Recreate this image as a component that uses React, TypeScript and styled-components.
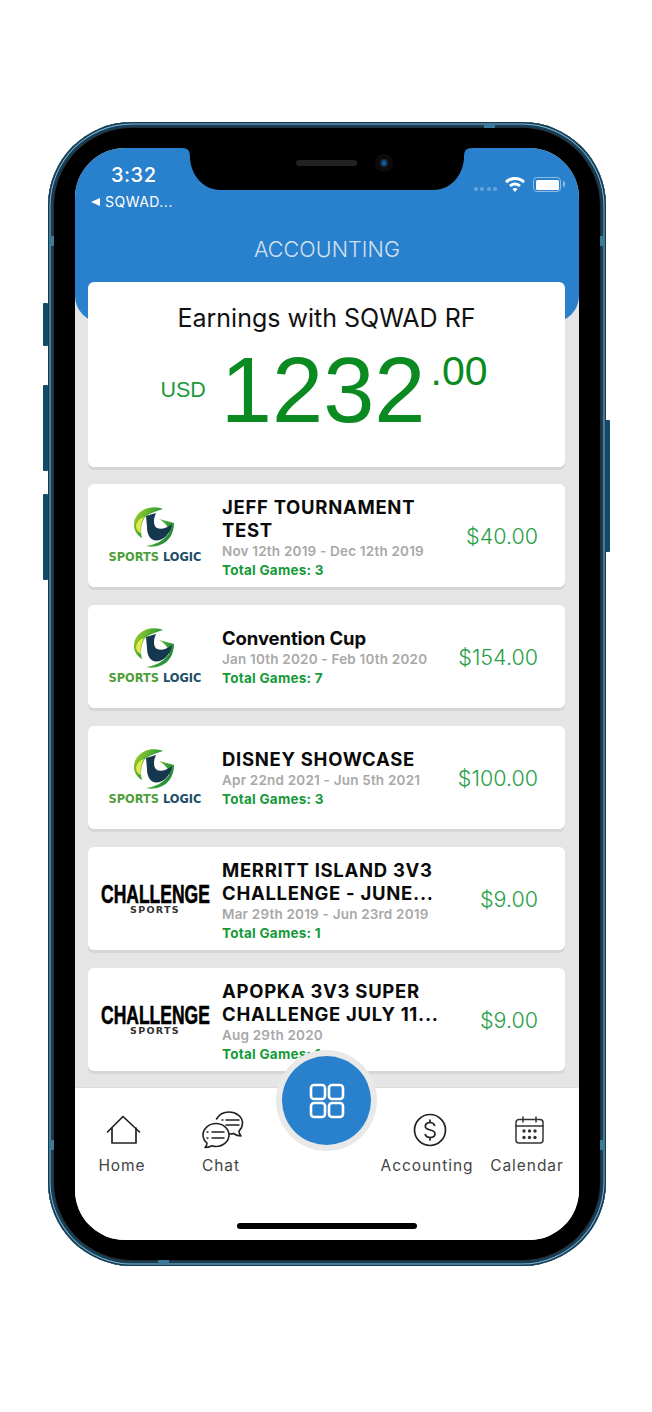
import React from 'react';
import styled, { createGlobalStyle } from 'styled-components';

const BLUE = '#2980cc';
const GREEN = '#17993a';

const GlobalStyle = createGlobalStyle`
  html, body {
    margin: 0;
    background: #fff;
  }
  body {
    font-family: 'Inter', 'Liberation Sans', sans-serif;
  }
`;

type Logo = 'logic' | 'challenge';

const events: {
  title: string[];
  dates: string;
  games: number;
  price: string;
  logo: Logo;
}[] = [
  { title: ['JEFF TOURNAMENT', 'TEST'], dates: 'Nov 12th 2019 - Dec 12th 2019', games: 3, price: '$40.00', logo: 'logic' },
  { title: ['Convention Cup'], dates: 'Jan 10th 2020 - Feb 10th 2020', games: 7, price: '$154.00', logo: 'logic' },
  { title: ['DISNEY SHOWCASE'], dates: 'Apr 22nd 2021 - Jun 5th 2021', games: 3, price: '$100.00', logo: 'logic' },
  { title: ['MERRITT ISLAND 3V3', 'CHALLENGE - JUNE...'], dates: 'Mar 29th 2019 - Jun 23rd 2019', games: 1, price: '$9.00', logo: 'challenge' },
  { title: ['APOPKA 3V3 SUPER', 'CHALLENGE JULY 11...'], dates: 'Aug 29th 2020', games: 1, price: '$9.00', logo: 'challenge' },
];

const SportsLogicLogo = () => (
  <LogicWrap>
    <svg width="44" height="42" viewBox="0 0 44 42">
      <defs>
        <linearGradient id="swoosh" x1="0" y1="0.2" x2="1" y2="0.8">
          <stop offset="0" stopColor="#a6d02c" />
          <stop offset="0.5" stopColor="#3fa535" />
          <stop offset="1" stopColor="#137a38" />
        </linearGradient>
      </defs>
      <path d="M30 2C24 -1 12 -1 5 7C-1 14 -1 25 9 31C7 24 8 16 12 10C17 6 24 4 30 2Z" fill="url(#swoosh)" />
      <path d="M26 12L41 16C41 26 36 35 27 38C22 40 17 40 13 39C21 38 31 34 36 26C37 22 34 17 26 12Z" fill="url(#swoosh)" />
      <path d="M3 19C4 14 7 11 11 10C8 15 7 21 8 26C5 25 3 22 3 19Z" fill="#e3e84e" />
      <path d="M13 9L23 6L21.500 10C20.500 15 21 19 24 21C28 23 34 21 39 17C38 25 32 33 24 33.500C17 34 14 27 14 20Z" fill="#16384f" />
    </svg>
    <LogicName>
      SPORTS <span>LOGIC</span>
    </LogicName>
  </LogicWrap>
);

const ChallengeLogo = () => (
  <ChallengeWrap>
    <ChallengeName>CHALLENGE</ChallengeName>
    <ChallengeSub>SPORTS</ChallengeSub>
  </ChallengeWrap>
);

const HomeIcon = () => (
  <svg width="35" height="30" viewBox="0 0 35 30" fill="none" stroke="#222" strokeWidth="1.700" strokeLinejoin="round" strokeLinecap="round">
    <path d="M1.500 17L17 1.500L33.500 17" />
    <path d="M6 13V28H30V13" />
  </svg>
);

const ChatIcon = () => (
  <svg width="42" height="38" viewBox="0 0 42 38" fill="none" stroke="#222" strokeWidth="1.600" strokeLinecap="round" strokeLinejoin="round">
    <path d="M14.500 8C17 3.500 22 1 27 1C34 1 40.500 5.500 40.500 12C40.500 15.500 39 18 37 20C37 22 38 24 39 25C36 25 33.500 24 31.500 22.500C30.500 22.800 29.500 23 28 23" />
    <path d="M14 12.500C7 12.500 1 17.500 1 24C1 27.500 2.500 30 5 32C5 33.500 4.500 35 3 36.500C6 36.500 8.500 35.500 10 34.700C11.300 35.200 12.700 35.500 14 35.500C21 35.500 27 30.500 27 24C27 17.500 21 12.500 14 12.500Z" fill="#fff" />
    <path d="M20 9H21M24 9H37M24 14H37" strokeWidth="1.400" />
    <path d="M5 21H6M10 21H22M5 27H6M10 27H22" strokeWidth="1.400" />
  </svg>
);

const DollarIcon = () => (
  <svg width="34" height="34" viewBox="0 0 34 34" fill="none" stroke="#222" strokeWidth="1.700" strokeLinecap="round">
    <circle cx="17" cy="17" r="15.500" />
    <path d="M21.500 12.500C21 10.500 19 9.500 17 9.500C14.300 9.500 12.300 11 12.300 13.300C12.300 18.500 22 15.500 22 20.800C22 23.200 19.800 24.500 17 24.500C14.700 24.500 12.800 23.300 12.200 21.500" />
    <path d="M17 7V9.500M17 24.500V27" />
  </svg>
);

const CalendarIcon = () => (
  <svg width="29" height="28" viewBox="0 0 29 28" fill="none" stroke="#333" strokeWidth="1.500" strokeLinecap="round">
    <rect x="1" y="3.500" width="27" height="23.500" rx="3" />
    <path d="M1 10H28M8 1V6M21 1V6" />
    <g fill="#333" stroke="none">
      <circle cx="9" cy="15" r="1.700" />
      <circle cx="14.500" cy="15" r="1.700" />
      <circle cx="20" cy="15" r="1.700" />
      <circle cx="9" cy="21.500" r="1.700" />
      <circle cx="14.500" cy="21.500" r="1.700" />
      <circle cx="20" cy="21.500" r="1.700" />
    </g>
  </svg>
);

const tabs = [
  { label: 'Home', icon: <HomeIcon />, col: 1, shift: 1 },
  { label: 'Chat', icon: <ChatIcon />, col: 2, shift: 2 },
  { label: 'Accounting', icon: <DollarIcon />, col: 4, shift: 3 },
  { label: 'Calendar', icon: <CalendarIcon />, col: 5, shift: 2 },
];

const App = () => (
  <>
    <GlobalStyle />
    <Phone>
      <SideButton $side="left" $top={181} $height={43} />
      <SideButton $side="left" $top={263} $height={86} />
      <SideButton $side="left" $top={372} $height={86} />
      <SideButton $side="right" $top={298} $height={132} />
      <Band $left={2} $top={114} $w={4} $h={10} />
      <Band $left={552} $top={114} $w={4} $h={10} />
      <Band $left={2} $top={1018} $w={4} $h={10} />
      <Band $left={552} $top={1018} $w={4} $h={10} />
      <Band $left={436} $top={2} $w={11} $h={4} />
      <Band $left={110} $top={1138} $w={11} $h={4} />

      <Screen>
        <Notch>
          <svg width="290" height="42" viewBox="0 0 290 42">
            <path d="M0 0H290C283 0 282 4 282 10C281 28 268 42 252 42H38C22 42 9 28 8 10C8 4 7 0 0 0Z" fill="#000" />
          </svg>
          <Speaker />
          <Camera />
        </Notch>

        <Header>
          <StatusRow>
            <StatusLeft>
              <Time>3:32</Time>
              <BackLink>
                <BackArrow />
                SQWAD...
              </BackLink>
            </StatusLeft>
            <StatusRight>
              <Dots>
                <i />
                <i />
                <i />
                <i />
              </Dots>
              <svg width="20" height="15" viewBox="0 0 20 15" fill="#fff">
                <path d="M10 0C6 0 2.700 1.500 0 4L2 6.200C4.200 4.200 7 3 10 3C13 3 15.800 4.200 18 6.200L20 4C17.300 1.500 14 0 10 0Z" />
                <path d="M10 5.500C7.700 5.500 5.600 6.400 4 7.900L6 10.100C7.100 9.100 8.500 8.500 10 8.500C11.500 8.500 12.900 9.100 14 10.100L16 7.900C14.400 6.400 12.300 5.500 10 5.500Z" />
                <path d="M10 11C9 11 8.100 11.400 7.500 12L10 15L12.500 12C11.900 11.400 11 11 10 11Z" />
              </svg>
              <Battery />
            </StatusRight>
          </StatusRow>
          <Title>ACCOUNTING</Title>
        </Header>

        <Content>
          <Hero>
            <HeroTitle>Earnings with SQWAD RF</HeroTitle>
            <Amount>
              <Currency>USD</Currency>
              <Whole>1232</Whole>
              <Cents>.00</Cents>
            </Amount>
          </Hero>

          {events.map((event) => (
            <Card key={event.title[0]}>
              <LogoCell>{event.logo === 'logic' ? <SportsLogicLogo /> : <ChallengeLogo />}</LogoCell>
              <Info $twoLines={event.title.length > 1}>
                {event.title.map((line) => (
                  <EventTitle key={line} $caps={line === line.toUpperCase()}>
                    {line}
                  </EventTitle>
                ))}
                <Dates>{event.dates}</Dates>
                <Games>Total Games: {event.games}</Games>
              </Info>
              <Price>{event.price}</Price>
            </Card>
          ))}
        </Content>

        <TabBar>
          {tabs.map((tab) => (
            <Tab key={tab.label} $col={tab.col}>
              <IconSlot $shift={tab.shift}>{tab.icon}</IconSlot>
              <TabLabel>{tab.label}</TabLabel>
            </Tab>
          ))}
          <Fab>
            <svg width="36" height="36" viewBox="0 0 36 36" fill="none" stroke="#fff" strokeWidth="2.600">
              <rect x="2" y="2" width="14" height="14" rx="3" />
              <rect x="20" y="2" width="14" height="14" rx="3" />
              <rect x="2" y="20" width="14" height="14" rx="3" />
              <rect x="20" y="20" width="14" height="14" rx="3" />
            </svg>
          </Fab>
          <HomeIndicator />
        </TabBar>
      </Screen>
    </Phone>
  </>
);

export default App;

const Phone = styled.div`
  position: relative;
  box-sizing: border-box;
  width: 558px;
  height: 1144px;
  margin: 122px 0 170px 48px;
  padding: 26px 27px;
  background: #000;
  border-radius: 84px;
  box-shadow:
    inset 0 0 0 1.5px #0f3d58,
    inset 0 0 0 2.500px #8fb3c6,
    inset 0 0 0 5px #12405c,
    inset 0 0 0 6px #2b2b2b;
`;

const SideButton = styled.div<{ $side: 'left' | 'right'; $top: number; $height: number }>`
  position: absolute;
  top: ${({ $top }) => $top}px;
  ${({ $side }) => ($side === 'left' ? 'left: -5px;' : 'right: -4px;')}
  width: 5px;
  height: ${({ $height }) => $height}px;
  background: #134a68;
  border-radius: 1px;
`;

const Band = styled.div<{ $left: number; $top: number; $w: number; $h: number }>`
  position: absolute;
  left: ${({ $left }) => $left}px;
  top: ${({ $top }) => $top}px;
  width: ${({ $w }) => $w}px;
  height: ${({ $h }) => $h}px;
  background: #3d7a9a;
`;

const Screen = styled.div`
  position: relative;
  display: flex;
  flex-direction: column;
  height: 1092px;
  overflow: hidden;
  border-radius: 50px;
  background: #e5e5e5;
`;

const Notch = styled.div`
  position: absolute;
  top: 0;
  left: 107px;
  z-index: 5;
  width: 290px;
  height: 42px;

  svg {
    display: block;
  }
`;

const Speaker = styled.div`
  position: absolute;
  top: 12px;
  left: 114px;
  width: 61px;
  height: 6px;
  border-radius: 3px;
  background: #222;
`;

const Camera = styled.div`
  position: absolute;
  top: 6px;
  left: 193px;
  width: 18px;
  height: 18px;
  border-radius: 50%;
  background: radial-gradient(circle, #1f6db0 0, #123a5c 3px, #0b0b0e 4.500px);
`;

const Header = styled.header`
  flex: none;
  height: 174px;
  background: ${BLUE};
  border-radius: 0 0 26px 26px;
`;

const StatusRow = styled.div`
  display: flex;
  justify-content: space-between;
  height: 66px;
  padding: 15px 15px 0 16px;
  box-sizing: border-box;
  color: #fff;
`;

const StatusLeft = styled.div`
  display: flex;
  flex-direction: column;
`;

const Time = styled.div`
  margin-left: 20px;
  font-size: 20px;
  font-weight: 500;
  line-height: 24px;
  letter-spacing: 0.5px;
`;

const BackLink = styled.div`
  display: flex;
  align-items: center;
  gap: 5px;
  margin-top: 7px;
  font-size: 14px;
  line-height: 16px;
  letter-spacing: 0.5px;
`;

const BackArrow = styled.span`
  width: 0;
  height: 0;
  border-style: solid;
  border-width: 4.500px 9px 4.500px 0;
  border-color: transparent #fff transparent transparent;
`;

const StatusRight = styled.div`
  display: flex;
  align-items: flex-end;
  gap: 8px;
  height: 29px;
`;

const Dots = styled.div`
  display: flex;
  gap: 2.500px;
  margin-bottom: 1px;

  i {
    width: 4px;
    height: 4px;
    border-radius: 50%;
    background: #66a5dc;
  }
`;

const Battery = styled.div`
  position: relative;
  box-sizing: border-box;
  width: 28px;
  height: 15px;
  margin-right: 3px;
  border: 1.500px solid #8fbde6;
  border-radius: 4px;
  background: #fff;
  background-clip: content-box;
  padding: 1.500px;

  &::after {
    content: '';
    position: absolute;
    top: 3px;
    right: -5px;
    width: 2px;
    height: 6px;
    border-radius: 0 2px 2px 0;
    background: #8fbde6;
  }
`;

const Title = styled.h1`
  margin: 0;
  height: 70px;
  color: #d3e2f1;
  font-family: 'Inter', sans-serif;
  font-size: 21.500px;
  font-weight: 300;
  line-height: 70px;
  letter-spacing: 0.1px;
  text-align: center;
`;

const Content = styled.main`
  flex: 1;
  min-height: 0;
  display: flex;
  flex-direction: column;
  gap: 17px;
  margin-top: -40px;
  padding: 0 14px 0 13px;
  overflow: hidden;
`;

const Hero = styled.section`
  flex: none;
  height: 185px;
  box-sizing: border-box;
  padding-top: 20px;
  background: #fff;
  border-radius: 6px;
  box-shadow: 0 3px 0 #d6d6d6;
  text-align: center;
`;

const HeroTitle = styled.div`
  color: #111;
  font-size: 25px;
  line-height: 33px;
`;

const Amount = styled.div`
  display: flex;
  justify-content: center;
  color: #0b8a22;
  margin-top: 7px;
  padding-right: 5px;
  font-family: 'Liberation Sans', sans-serif;
`;

const Currency = styled.span`
  align-self: center;
  margin: 0 15px 0 0;
  color: #22993a;
  font-size: 21.500px;
`;

const Whole = styled.span`
  font-size: 92px;
  line-height: 96px;
`;

const Cents = styled.span`
  margin: 6px 0 0 5px;
  font-size: 41px;
  line-height: 46px;
`;

const Card = styled.article`
  flex: none;
  display: flex;
  align-items: center;
  height: 103px;
  margin-bottom: 1px;
  padding-right: 27px;
  background: #fff;
  border-radius: 6px;
  box-shadow: 0 3px 0 #d6d6d6;
`;

const LogoCell = styled.div`
  flex: none;
  display: flex;
  justify-content: center;
  width: 134px;
`;

const LogicWrap = styled.div`
  display: flex;
  flex-direction: column;
  align-items: center;
  margin-top: -2px;

  svg {
    display: block;
    margin-bottom: 3px;
    margin-left: 1px;
  }
`;

const LogicName = styled.div`
  color: #4f9e3a;
  font-family: 'DejaVu Sans', sans-serif;
  font-size: 11.400px;
  font-weight: 700;
  line-height: 11px;
  white-space: nowrap;

  span {
    color: #1d4d68;
  }
`;

const ChallengeWrap = styled.div`
  display: flex;
  flex-direction: column;
  align-items: center;
  width: 110px;
`;

const ChallengeName = styled.div`
  color: #000;
  font-family: 'Liberation Sans', sans-serif;
  font-size: 26.500px;
  font-weight: 700;
  line-height: 21px;
  white-space: nowrap;
  -webkit-text-stroke: 0.6px #000;
  transform: scaleX(0.66);
`;

const ChallengeSub = styled.div`
  color: #333;
  font-family: 'DejaVu Sans', sans-serif;
  font-size: 9.500px;
  font-weight: 700;
  line-height: 9px;
  letter-spacing: 1.300px;
`;

const Info = styled.div<{ $twoLines: boolean }>`
  flex: 1;
  min-width: 0;
  padding-top: ${({ $twoLines }) => ($twoLines ? 3 : 0)}px;
`;

const EventTitle = styled.div<{ $caps: boolean }>`
  color: #0a0a0a;
  font-size: 18.500px;
  font-weight: 700;
  line-height: 23px;
  letter-spacing: ${({ $caps }) => ($caps ? 0.7 : -0.1)}px;
  white-space: nowrap;
`;

const Dates = styled.div`
  color: #a8a8a8;
  font-size: 13.500px;
  font-weight: 600;
  line-height: 19px;
  letter-spacing: 0.2px;
  white-space: nowrap;
`;

const Games = styled.div`
  color: ${GREEN};
  font-size: 13.500px;
  font-weight: 700;
  line-height: 18px;
  letter-spacing: 0.25px;
`;

const Price = styled.div`
  flex: none;
  color: #27a046;
  font-size: 21.500px;
  font-weight: 300;
`;

const TabBar = styled.nav`
  position: relative;
  z-index: 2;
  flex: none;
  display: grid;
  grid-template-columns: 94px 104px 104px 100px 100px;
  align-content: start;
  height: 153px;
  box-sizing: border-box;
  border-top: 1px solid #dcdcdc;
  background: #fff;
`;

const Tab = styled.div<{ $col: number }>`
  grid-column: ${({ $col }) => $col};
  grid-row: 1;
  display: flex;
  flex-direction: column;
  align-items: center;
  padding-top: 21px;
`;

const IconSlot = styled.div<{ $shift: number }>`
  display: flex;
  align-items: center;
  justify-content: center;
  height: 42px;
  transform: translateX(${({ $shift }) => $shift}px);

  svg {
    display: block;
  }
`;

const TabLabel = styled.div`
  margin-top: 5px;
  color: #444;
  font-size: 15.500px;
  line-height: 20px;
  letter-spacing: 0.95px;
  white-space: nowrap;
`;

const Fab = styled.div`
  position: absolute;
  top: -32px;
  left: 207px;
  display: flex;
  align-items: center;
  justify-content: center;
  width: 89px;
  height: 89px;
  border-radius: 50%;
  background: ${BLUE};
  box-shadow: 0 0 0 6px #e9e9e9;
`;

const HomeIndicator = styled.div`
  position: absolute;
  left: 162px;
  bottom: 11px;
  width: 180px;
  height: 6px;
  border-radius: 3px;
  background: #000;
`;
